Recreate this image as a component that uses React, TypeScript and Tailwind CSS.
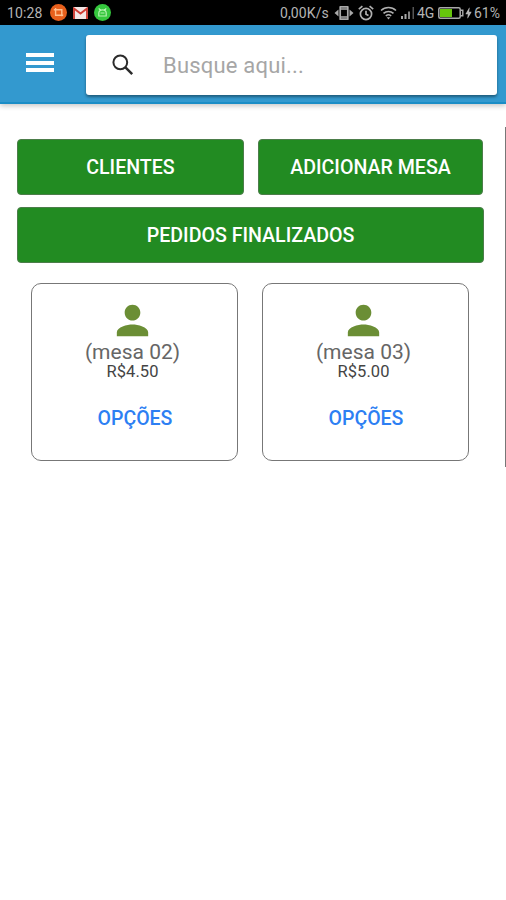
import React from "react";
import { MdBolt, MdPerson } from "react-icons/md";

interface Mesa {
  id: number;
  nome: string;
  total: string;
}

const mesas: Mesa[] = [
  { id: 2, nome: "(mesa 02)", total: "R$4.50" },
  { id: 3, nome: "(mesa 03)", total: "R$5.00" },
];

const StatusBar: React.FC = () => (
  <div className="flex h-[25px] items-center bg-black pl-[7px] pr-[5px] text-[14px] leading-none text-[#b4b4b4]">
    <span className="w-[43px] whitespace-nowrap pt-px tracking-[0.1px]">
      10:28
    </span>

    {/* Notifications */}
    <svg className="h-[17px] w-[17px]" viewBox="0 0 17 17" fill="none">
      <circle cx="8.5" cy="8.5" r="8.5" fill="#e8601c" />
      <path
        d="M3.8 5.7h8v6.5M5.6 4v7.3H13.2"
        stroke="#ffc08e"
        strokeWidth="1.4"
      />
    </svg>
    <svg className="ml-[6px] h-[12px] w-[15px]" viewBox="0 0 15 12">
      <rect width="15" height="12" rx="1" fill="#f3e6e5" />
      <path
        d="M1 12V1.5l6.5 5 6.5-5V12"
        fill="none"
        stroke="#cf3d34"
        strokeWidth="1.9"
      />
    </svg>
    <svg className="ml-[6px] h-[17px] w-[17px]" viewBox="0 0 17 17" fill="none">
      <circle cx="8.5" cy="8.5" r="8.5" fill="#35c73d" />
      <path
        d="M4.8 12V9a3.7 3.2 0 0 1 7.4 0v3zM4.8 4.3l1.8 2.2M12.2 4.3l-1.8 2.2M6.5 9h4"
        stroke="#b5f2b0"
        strokeWidth="1.2"
      />
    </svg>

    {/* System */}
    <span className="ml-auto w-[54px] whitespace-nowrap pt-px tracking-[0.1px]">
      0,00K/s
    </span>
    <svg
      className="h-[16px] w-[20px]"
      viewBox="0 0 20 16"
      fill="none"
      stroke="#a9a9a9"
    >
      <path
        d="M6.2 1.8h7.6v12.4H6.2zM6.2 4h7.6M6.2 12h7.6"
        strokeWidth="1.7"
        strokeLinejoin="round"
      />
      <path d="M4.5 4.5v7L0.5 8zM15.5 4.5v7l4-3.5z" fill="#a9a9a9" stroke="none" />
    </svg>
    <svg
      className="ml-[4px] h-[16px] w-[16px]"
      viewBox="0 0 16 16"
      fill="none"
      stroke="#b0b0b0"
      strokeWidth="1.7"
    >
      <circle cx="8" cy="9" r="5.6" />
      <path d="M0.8 4.2l3.6-3M15.2 4.2l-3.6-3M8 5.8V9.3l2.5 1.2" />
    </svg>
    <svg
      className="ml-[6px] h-[14px] w-[17px]"
      viewBox="0 0 17 14"
      fill="none"
      stroke="#b0b0b0"
      strokeWidth="1.6"
    >
      <path d="M1 4.5a11 11 0 0 1 15 0M3.5 7.4a7.4 7.4 0 0 1 10 0M5.8 10a4 4 0 0 1 5.4 0" />
      <path d="M6.7 11.2h3.6L8.5 13.5z" fill="#b0b0b0" stroke="none" />
    </svg>
    <svg className="ml-[4px] h-[12px] w-[14px]" viewBox="0 0 14 12">
      <path d="M0 9h2v3H0zM3.5 7h2v5h-2z" fill="#a9a9a9" />
      <path d="M7 4.5h2V12H7z" fill="#858585" />
      <path d="M11.5 0h1.5v12h-1.5z" fill="#555" />
    </svg>
    <span className="ml-[2px] w-[21px] pt-px">4G</span>
    <svg className="h-[12px] w-[26px]" viewBox="0 0 26 12" fill="none">
      <rect
        x="0.8"
        y="0.8"
        width="21.4"
        height="10.4"
        rx="1.5"
        stroke="#a9a9a9"
        strokeWidth="1.5"
      />
      <path d="M2 2h12v8H2z" fill="#66c50c" />
      <path d="M22.5 3.3h2.3v5.4h-2.3" stroke="#a9a9a9" strokeWidth="1.4" />
    </svg>
    <MdBolt className="-ml-[1px] h-[16px] w-[11px] scale-[1.3] text-[#b4b4b4]" />
    <span className="w-[27px] whitespace-nowrap pt-px">61%</span>
  </div>
);

const Header: React.FC = () => (
  <header className="flex h-[79px] items-start border-b-2 border-[#1b8dc6] bg-[#3399cf] pt-[10px] shadow-[0_2px_5px_rgba(0,0,0,0.22)]">
    <button
      className="ml-[26px] mt-[18px] flex w-[28px] flex-col gap-[3.6px]"
      aria-label="Menu"
    >
      <span className="h-[4px] w-full bg-white" />
      <span className="h-[4px] w-full bg-white" />
      <span className="h-[4px] w-full bg-white" />
    </button>
    <div className="ml-[32px] flex h-[60px] w-[411px] items-center rounded-[3px] bg-white shadow-[0_2px_3px_rgba(0,0,0,0.4)]">
      <svg
        className="ml-[26px] h-[22px] w-[22px]"
        viewBox="0 0 22 22"
        fill="none"
        stroke="#2b2b2b"
      >
        <circle cx="8.3" cy="8.3" r="6.9" strokeWidth="2" />
        <path d="M13.2 13.2l7 7" strokeWidth="2.5" />
      </svg>
      <input
        className="ml-[29px] w-[300px] text-[22px] tracking-[0.2px] text-gray-700 outline-none placeholder:text-[#a6a6a6]"
        placeholder="Busque aqui..."
      />
    </div>
  </header>
);

const ActionButton: React.FC<{ label: string; className: string }> = ({
  label,
  className,
}) => (
  <button
    className={`${className} h-[56px] rounded-[4px] border border-[#4c7d4a] bg-[#228b22] pt-px text-[19.6px] font-medium text-white`}
  >
    {label}
  </button>
);

const MesaCard: React.FC<{ mesa: Mesa }> = ({ mesa }) => (
  <div className="flex h-[178px] w-[207px] flex-col items-center rounded-[10px] border border-[#777] pr-[4px] pt-[13px]">
    <MdPerson className="h-[47px] w-[47px] text-[#6b8e35]" />
    <p className="-mt-[4px] text-[21px] leading-[24px] text-[#666]">
      {mesa.nome}
    </p>
    <p className="text-[16.5px] leading-[15px] tracking-[0.1px] text-[#444]">
      {mesa.total}
    </p>
    <button className="ml-[5px] mt-[26px] text-[19.5px] leading-[28px] font-medium text-[#2d7ff3]">
      OPÇÕES
    </button>
  </div>
);

const App: React.FC = () => {
  return (
    <div className="h-[900px] w-[506px] overflow-hidden bg-white font-['Roboto',sans-serif]">
      <StatusBar />
      <Header />

      <main className="flex justify-between pt-[23px]">
        <div className="pl-[17px] pt-[12px]">
          <div className="flex gap-[14px]">
            <ActionButton label="CLIENTES" className="w-[227px]" />
            <ActionButton label="ADICIONAR MESA" className="w-[225px]" />
          </div>
          <ActionButton
            label="PEDIDOS FINALIZADOS"
            className="mt-[12px] w-[467px]"
          />

          <div className="mt-[20px] flex gap-[24px] pl-[14px]">
            {mesas.map((mesa) => (
              <MesaCard key={mesa.id} mesa={mesa} />
            ))}
          </div>
        </div>

        {/* Scroll indicator */}
        <div className="h-[340px] w-px bg-[#777]" />
      </main>
    </div>
  );
};

export default App;
